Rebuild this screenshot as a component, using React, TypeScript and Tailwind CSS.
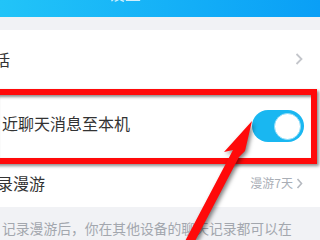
import React from "react";

const font = { fontFamily: '"Noto Sans CJK SC", "Noto Sans", sans-serif' };

export default function App() {
  return (
    <div
      className="relative w-[320px] h-[240px] overflow-hidden bg-[#f1f2f5]"
      style={font}
    >
      {/* header */}
      <div className="h-[17px] overflow-hidden bg-gradient-to-r from-[#22c4f8] to-[#0a9ff6] flex justify-start pl-[109px]">
        <span className="text-white text-[16px] leading-[20px] -mt-[17px] opacity-80">设置</span>
      </div>
      <div className="h-[13px]" />
      {/* row 1 */}
      <div className="h-[58px] bg-white flex items-center justify-between pr-[17px]">
        <span className="text-[16px] text-[#333] -ml-[6px]">话</span>
        <svg width="8" height="12" viewBox="0 0 8 12">
          <polyline points="1.5,1 6.5,6 1.5,11" fill="none" stroke="#c4c6cb" strokeWidth="1.8" />
        </svg>
      </div>
      {/* row 2 */}
      <div className="relative h-[75px] bg-white flex items-center justify-between pr-[16px]">
        <span className="text-[16px] text-[#333] ml-[2px] mt-[-6px]">近聊天消息至本机</span>
        <div className="w-[52px] h-[32px] rounded-full bg-[#19b7f1] flex items-center justify-end pr-[3px] mt-[1px]">
          <div className="w-[27px] h-[27px] rounded-full bg-white border border-[#8fdcf8]" />
        </div>
        <div className="absolute left-[-10px] top-[1px] w-[327px] h-[75px] border-[6px] border-[#ff0a0a] shadow-[2px_2px_3px_rgba(0,0,0,0.45),inset_2px_2px_3px_rgba(0,0,0,0.45)]" />
      </div>
      {/* row 3 */}
      <div className="h-[44px] bg-white flex items-center justify-between pr-[17px]">
        <span className="text-[16px] text-[#333] -ml-[3px] mt-[-4px]">录漫游</span>
        <div className="flex items-center gap-[3px] text-[12px] text-[#a9aeb6] mt-[-4px]">
          <span>漫游7天</span>
          <svg width="7" height="11" viewBox="0 0 7 11">
            <polyline points="1.5,1 5.5,5.5 1.5,10" fill="none" stroke="#b5b9c0" strokeWidth="1.6" />
          </svg>
        </div>
      </div>
      {/* description */}
      <div className="pt-[13px] pl-[2px] text-[13.8px] leading-[16px] text-[#a3a7ae] whitespace-nowrap">
        记录漫游后，你在其他设备的聊天记录都可以在
      </div>
      {/* arrow */}
      <svg
        className="absolute left-0 top-0"
        width="320"
        height="240"
        viewBox="0 0 320 240"
        style={{ filter: "drop-shadow(2px 2px 2px rgba(0,0,0,0.5))" }}
      >
        <polygon
          points="252,121 224,152 233,150 183,245 193,245 239,157 245,151"
          fill="#ff0a0a"
        />
      </svg>
    </div>
  );
}
